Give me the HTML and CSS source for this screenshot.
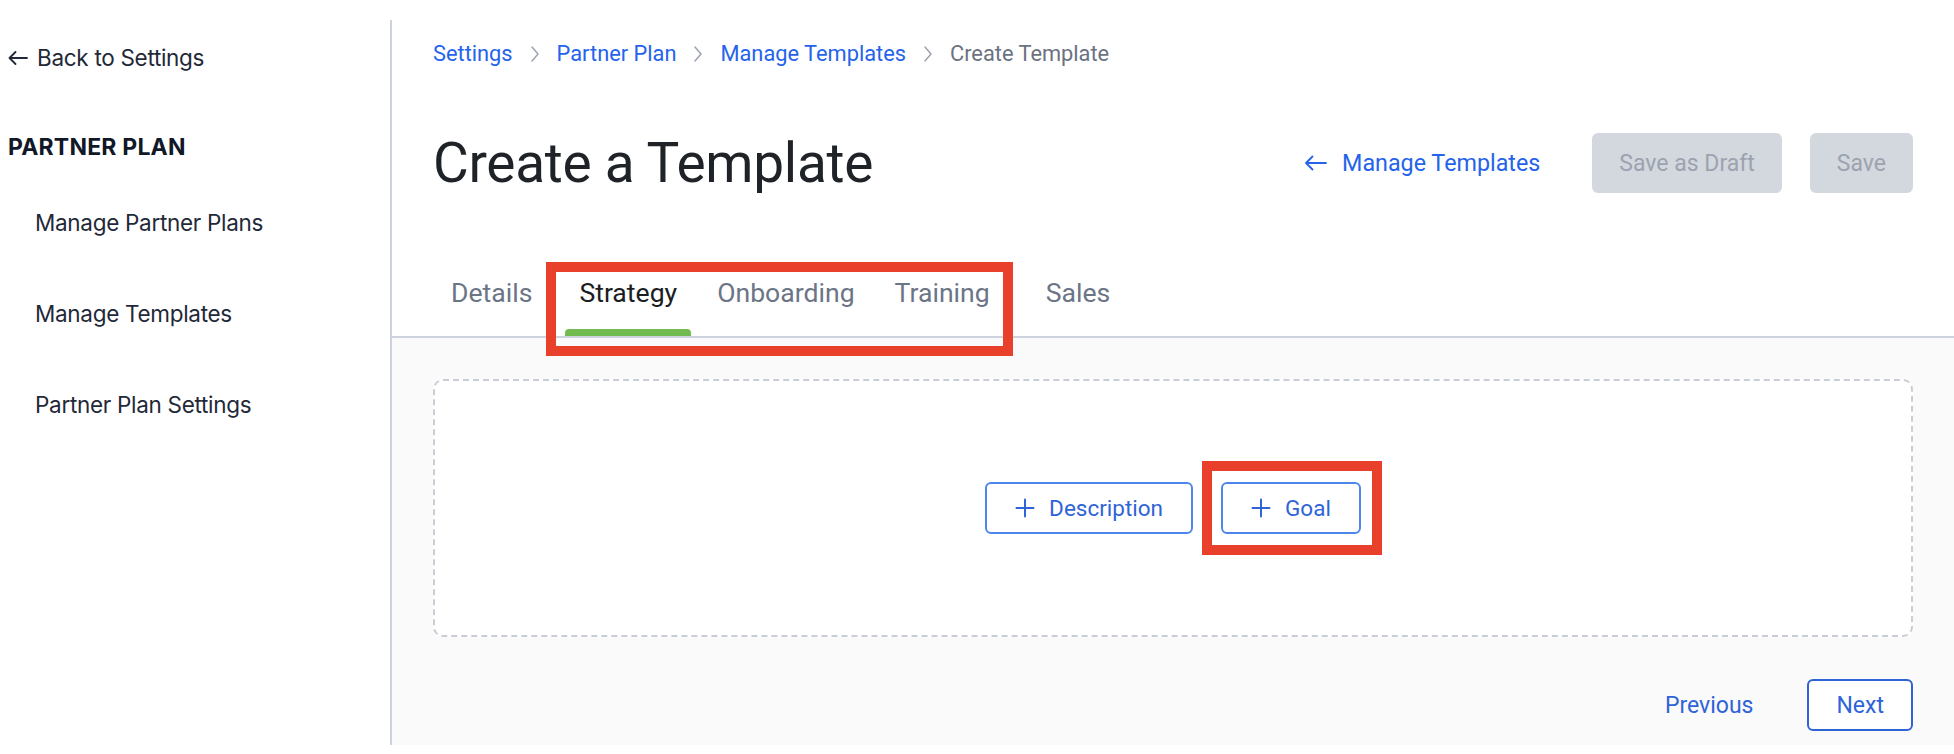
FILE: index.html
```html
<!DOCTYPE html>
<html lang="en">
<head>
    <meta charset="UTF-8">
    <meta name="viewport" content="width=device-width, initial-scale=1.0">
    <title>Create a Template</title>
    <link rel="stylesheet" href="styles.css">
</head>
<body>
    <div class="layout">
        <aside class="sidebar">
            <a href="#" class="back-link">
                <svg class="arrow-icon" width="20" height="14" viewBox="0 0 20 14"><path d="M19 7H1.5M7.5 1L1.5 7l6 6" fill="none" stroke="currentColor" stroke-width="1.8" stroke-linecap="round" stroke-linejoin="round"/></svg>
                Back to Settings
            </a>
            <div class="side-title">PARTNER PLAN</div>
            <nav class="side-nav">
                <a href="#" class="side-item">Manage Partner Plans</a>
                <a href="#" class="side-item">Manage Templates</a>
                <a href="#" class="side-item">Partner Plan Settings</a>
            </nav>
        </aside>

        <main class="main">
            <header class="main-header">
                <div class="breadcrumb">
                    <a href="#">Settings</a>
                    <svg class="chevron" width="10" height="18" viewBox="0 0 10 18"><path d="M2 2l6 7-6 7" fill="none" stroke="currentColor" stroke-width="1.5" stroke-linecap="round" stroke-linejoin="round"/></svg>
                    <a href="#">Partner Plan</a>
                    <svg class="chevron" width="10" height="18" viewBox="0 0 10 18"><path d="M2 2l6 7-6 7" fill="none" stroke="currentColor" stroke-width="1.5" stroke-linecap="round" stroke-linejoin="round"/></svg>
                    <a href="#">Manage Templates</a>
                    <svg class="chevron" width="10" height="18" viewBox="0 0 10 18"><path d="M2 2l6 7-6 7" fill="none" stroke="currentColor" stroke-width="1.5" stroke-linecap="round" stroke-linejoin="round"/></svg>
                    <span class="current">Create Template</span>
                </div>

                <div class="title-row">
                    <h1>Create a Template</h1>
                    <div class="actions">
                        <a href="#" class="manage-link">
                            <svg class="arrow-icon" width="24" height="16" viewBox="0 0 24 16"><path d="M22 8H2M8.5 1.5L2 8l6.5 6.5" fill="none" stroke="currentColor" stroke-width="1.8" stroke-linecap="round" stroke-linejoin="round"/></svg>
                            Manage Templates
                        </a>
                        <button class="btn-disabled btn-draft">Save as Draft</button>
                        <button class="btn-disabled btn-save">Save</button>
                    </div>
                </div>

                <div class="tabs">
                    <a href="#" class="tab">Details</a>
                    <div class="tab-group">
                        <a href="#" class="tab active">Strategy</a>
                        <a href="#" class="tab">Onboarding</a>
                        <a href="#" class="tab">Training</a>
                    </div>
                    <a href="#" class="tab tab-last">Sales</a>
                </div>
            </header>

            <section class="content">
                <div class="drop-zone">
                    <button class="btn-outline">
                        <svg class="plus-icon" width="20" height="20" viewBox="0 0 20 20"><path d="M10 1.5v17M1.5 10h17" fill="none" stroke="currentColor" stroke-width="2" stroke-linecap="round"/></svg>
                        Description
                    </button>
                    <span class="highlight">
                        <button class="btn-outline">
                            <svg class="plus-icon" width="20" height="20" viewBox="0 0 20 20"><path d="M10 1.5v17M1.5 10h17" fill="none" stroke="currentColor" stroke-width="2" stroke-linecap="round"/></svg>
                            Goal
                        </button>
                    </span>
                </div>
                <div class="footer">
                    <button class="btn-text">Previous</button>
                    <button class="btn-next">Next</button>
                </div>
            </section>
        </main>
    </div>
</body>
</html>
```

FILE: styles.css
```css
body {
    margin: 0;
    padding: 0;
    background-color: #fff;
    font-family: Roboto, "Liberation Sans", sans-serif;
    color: #1f2328;
}

a {
    text-decoration: none;
}

button {
    font-family: inherit;
    cursor: pointer;
}

.layout {
    display: flex;
    margin-top: 20px;
    height: 725px;
}

/* left column */
.sidebar {
    width: 392px;
    flex-shrink: 0;
    box-sizing: border-box;
    border-right: 2px solid #cdd3dc;
    padding: 23px 0 0 8px;
    font-family: Inter, Roboto, sans-serif;
}

.back-link {
    display: flex;
    align-items: center;
    gap: 9px;
    font-size: 22.5px;
    line-height: 30px;
    color: #1f2937;
    letter-spacing: -0.3px;
}

.side-title {
    margin-top: 59px;
    font-size: 23px;
    line-height: 30px;
    font-weight: 700;
    color: #111827;
    letter-spacing: 0.2px;
}

.side-nav {
    display: flex;
    flex-direction: column;
    margin-top: 15px;
}

.side-item {
    padding: 30px 0 30px 27px;
    font-size: 22.5px;
    line-height: 31px;
    color: #1f2937;
    letter-spacing: -0.3px;
}

/* main column */
.main {
    flex: 1;
    display: flex;
    flex-direction: column;
    min-width: 0;
}

.main-header {
    padding: 0 41px;
}

.breadcrumb {
    display: flex;
    align-items: center;
    margin-top: 20px;
    font-size: 21.8px;
    line-height: 28px;
}

.breadcrumb a {
    color: #2563eb;
}

.breadcrumb .current {
    color: #6b7280;
}

.chevron {
    color: #9ca3af;
    margin: 0 17px;
}

.title-row {
    display: flex;
    align-items: center;
    justify-content: space-between;
    margin-top: 62px;
    height: 66px;
}

h1 {
    margin: 0;
    font-size: 55px;
    font-weight: 400;
    line-height: 66px;
    letter-spacing: -0.3px;
    color: #1f2328;
}

.actions {
    display: flex;
    align-items: center;
}

.manage-link {
    display: flex;
    align-items: center;
    gap: 14px;
    font-size: 23.3px;
    color: #2563eb;
    margin-right: 52px;
}

.btn-disabled {
    height: 60px;
    border: none;
    border-radius: 6px;
    background-color: #d3d7de;
    color: #9ca3af;
    font-size: 23px;
    padding: 0 27px;
    cursor: default;
}

.btn-save {
    margin-left: 28px;
}

.tabs {
    display: flex;
    margin: 81px -41px 0;
    padding-left: 45px;
    border-bottom: 2px solid #cdd3dc;
}

.tab-group {
    display: flex;
    position: relative;
    margin-left: 7px;
}

.tab-group::after {
    content: "";
    position: absolute;
    top: -15px;
    left: -19px;
    right: -9px;
    bottom: -20px;
    border: 10px solid #e8402a;
    pointer-events: none;
}

.tab {
    position: relative;
    padding: 0 14px 27px;
    margin-right: 12px;
    font-size: 26.6px;
    line-height: 32px;
    color: #6b7586;
}

.tab-group .tab:last-child {
    margin-right: 0;
}

.tab-last {
    margin-left: 28px;
}

.tab.active {
    color: #1a1d21;
}

.tab.active::after {
    content: "";
    position: absolute;
    left: 0;
    right: 0;
    bottom: 0;
    height: 7px;
    border-radius: 4px 4px 0 0;
    background-color: #71bb50;
}

/* grey content area */
.content {
    flex: 1;
    background-color: #fafafa;
    padding: 41px 41px 14px;
    display: flex;
    flex-direction: column;
}

.drop-zone {
    height: 258px;
    box-sizing: border-box;
    border: 2px dashed #c9ced6;
    border-radius: 10px;
    background-color: #fff;
    display: flex;
    align-items: center;
    justify-content: center;
    gap: 28px;
}

.btn-outline {
    display: flex;
    align-items: center;
    gap: 14px;
    height: 52px;
    padding: 0 28px;
    border: 2px solid #4f86ee;
    border-radius: 6px;
    background-color: #fff;
    color: #2f63d8;
    font-size: 22.5px;
}

.highlight {
    position: relative;
}

.highlight::after {
    content: "";
    position: absolute;
    top: -21px;
    left: -19px;
    right: -21px;
    bottom: -21px;
    border: 10px solid #e8402a;
    pointer-events: none;
}

.footer {
    display: flex;
    justify-content: flex-end;
    align-items: center;
    margin-top: 42px;
}

.btn-text {
    height: 52px;
    padding: 0 27px;
    margin-right: 27px;
    border: none;
    background: none;
    color: #2f63d8;
    font-size: 23px;
}

.btn-next {
    height: 52px;
    padding: 0 27px;
    border: 2px solid #2f63d8;
    border-radius: 6px;
    background-color: #fff;
    color: #2f63d8;
    font-size: 23px;
}
```
